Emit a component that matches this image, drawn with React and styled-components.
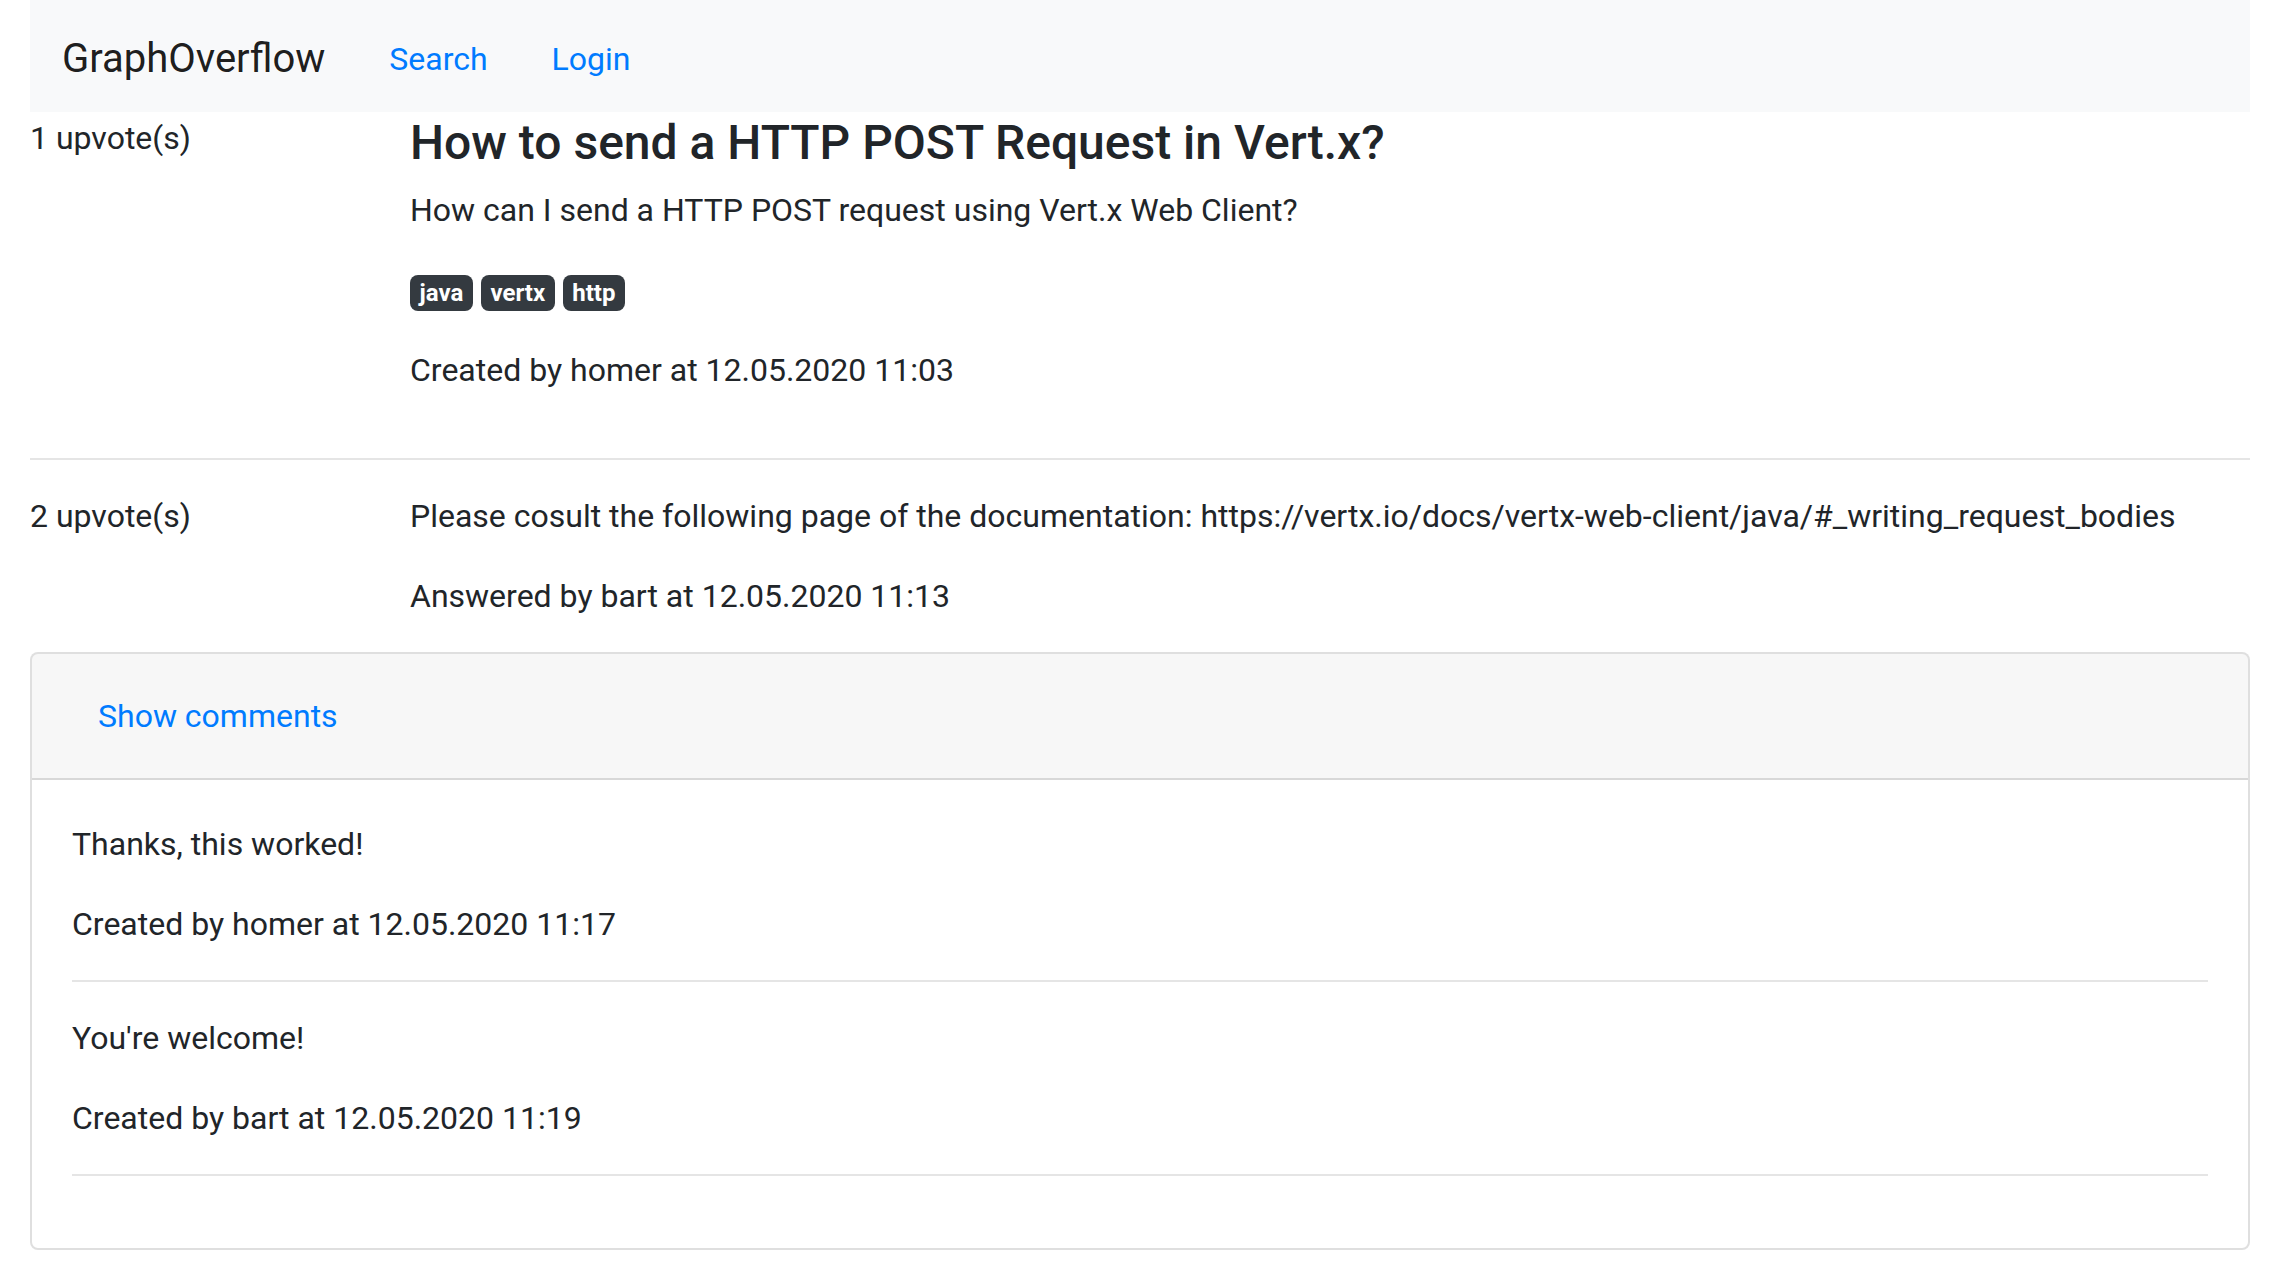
import React from 'react';
import styled, { createGlobalStyle } from 'styled-components';

const GlobalStyle = createGlobalStyle`
  *, *::before, *::after { box-sizing: border-box; }
  body {
    margin: 0;
    font-family: Roboto, "Liberation Sans", Arial, sans-serif;
    font-size: 32px;
    line-height: 1.5;
    color: #212529;
    background: #fff;
  }
`;

const Page = styled.div`
  padding: 0 30px;
`;

const Navbar = styled.nav`
  display: flex;
  align-items: center;
  padding: 19px 32px 13px;
  background-color: #f8f9fa;
`;

const Brand = styled.a`
  font-size: 40px;
  line-height: 1.5;
  padding: 10px 0;
  margin-right: 64px;
  color: rgba(0, 0, 0, 0.9);
  text-decoration: none;
`;

const NavLink = styled.a`
  color: #007bff;
  text-decoration: none;
  & + & { margin-left: 64px; }
`;

const Row = styled.div`
  display: grid;
  grid-template-columns: 320px 1fr;
  column-gap: 60px;
  padding-top: ${p => (p.$first ? '2px' : '0')};
`;

const Votes = styled.div``;

const Title = styled.h4`
  margin: 0 0 14px;
  font-size: 48px;
  font-weight: 500;
  line-height: 1.2;
`;

const Text = styled.p`
  margin: 0 0 32px;
`;

const Badge = styled.span`
  display: inline-block;
  padding: 6px 9.6px;
  font-size: 24px;
  font-weight: 700;
  line-height: 1;
  color: #fff;
  background-color: #343a40;
  border-radius: 8px;
  vertical-align: baseline;
`;

const Rule = styled.hr`
  border: 0;
  border-top: 2px solid rgba(0, 0, 0, 0.1);
  margin: 32px 0;
`;

const Card = styled.div`
  border: 2px solid rgba(0, 0, 0, 0.125);
  border-radius: 8px;
  background: #fff;
`;

const CardHeader = styled.div`
  padding: 24px 40px;
  background-color: rgba(0, 0, 0, 0.03);
  border-bottom: 2px solid rgba(0, 0, 0, 0.125);
  border-radius: 6px 6px 0 0;
`;

const LinkButton = styled.button`
  font: inherit;
  line-height: 1.5;
  padding: 12px 24px;
  border: 2px solid transparent;
  background: none;
  color: #007bff;
  cursor: pointer;
`;

const CardBody = styled.div`
  padding: 40px;
`;

const question = {
  votes: 1,
  title: 'How to send a HTTP POST Request in Vert.x?',
  content: 'How can I send a HTTP POST request using Vert.x Web Client?',
  tags: ['java', 'vertx', 'http'],
  author: 'homer',
  created: '12.05.2020 11:03',
};

const answer = {
  votes: 2,
  content:
    'Please cosult the following page of the documentation: https://vertx.io/docs/vertx-web-client/java/#_writing_request_bodies',
  author: 'bart',
  created: '12.05.2020 11:13',
};

const comments = [
  { content: 'Thanks, this worked!', author: 'homer', created: '12.05.2020 11:17' },
  { content: "You're welcome!", author: 'bart', created: '12.05.2020 11:19' },
];

const App = () => (
  <Page>
    <GlobalStyle />
    <Navbar>
      <Brand href="#">GraphOverflow</Brand>
      <NavLink href="#">Search</NavLink>
      <NavLink href="#">Login</NavLink>
    </Navbar>

    <Row $first>
      <Votes>{question.votes} upvote(s)</Votes>
      <div>
        <Title>{question.title}</Title>
        <Text>{question.content}</Text>
        <Text>
          {question.tags.map((t, i) => (
            <React.Fragment key={t}>
              {i > 0 && ' '}
              <Badge>{t}</Badge>
            </React.Fragment>
          ))}
        </Text>
        <Text>Created by {question.author} at {question.created}</Text>
      </div>
    </Row>
    <Rule />

    <Row>
      <Votes>{answer.votes} upvote(s)</Votes>
      <div>
        <Text>{answer.content}</Text>
        <Text>Answered by {answer.author} at {answer.created}</Text>
      </div>
    </Row>
    <Card>
      <CardHeader>
        <LinkButton>Show comments</LinkButton>
      </CardHeader>
      <CardBody>
        {comments.map(c => (
          <div key={c.created}>
            <Text>{c.content}</Text>
            <Text>Created by {c.author} at {c.created}</Text>
            <Rule />
          </div>
        ))}
      </CardBody>
    </Card>
    <Rule />
  </Page>
);

export default App;
